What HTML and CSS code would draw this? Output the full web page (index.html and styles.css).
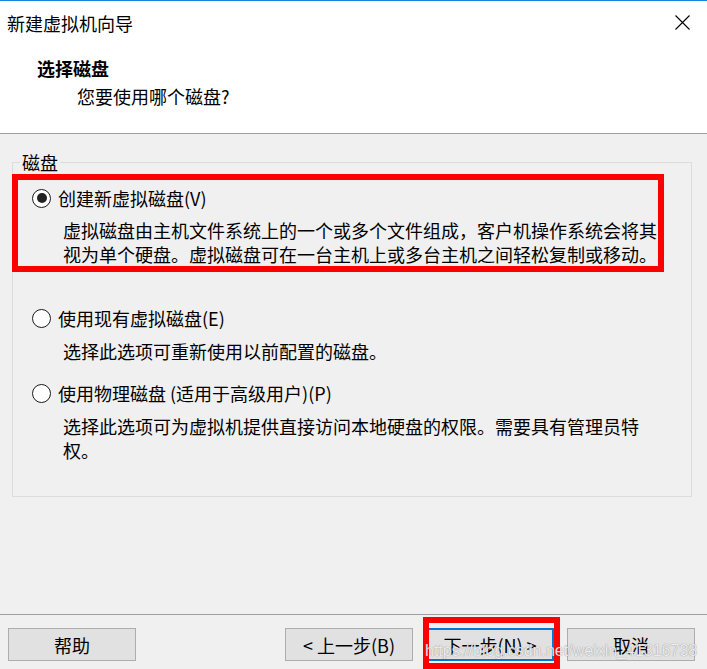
FILE: index.html
```html
<!DOCTYPE html>
<html lang="zh-CN">
<head>
<meta charset="utf-8">
<title>新建虚拟机向导</title>
<link rel="stylesheet" href="styles.css">
</head>
<body>
<div class="window">
  <div class="titlebar">
    <span class="title">新建虚拟机向导</span>
    <svg class="close" width="15" height="15" viewBox="0 0 15 15"><path d="M0.5 0.5L14.5 14.5M14.5 0.5L0.5 14.5" stroke="#000" stroke-width="1.1" fill="none"/></svg>
  </div>
  <div class="header">
    <div class="heading">选择磁盘</div>
    <div class="subheading">您要使用哪个磁盘?</div>
  </div>
  <div class="content">
    <fieldset class="group">
      <legend>磁盘</legend>
      <div class="option marked">
        <div class="opt-row"><span class="radio checked"></span><span class="label">创建新虚拟磁盘(V)</span></div>
        <p class="desc">虚拟磁盘由主机文件系统上的一个或多个文件组成，客户机操作系统会将其视为单个硬盘。虚拟磁盘可在一台主机上或多台主机之间轻松复制或移动。</p>
      </div>
      <div class="option second">
        <div class="opt-row"><span class="radio"></span><span class="label">使用现有虚拟磁盘(E)</span></div>
        <p class="desc">选择此选项可重新使用以前配置的磁盘。</p>
      </div>
      <div class="option third">
        <div class="opt-row"><span class="radio"></span><span class="label">使用物理磁盘 (适用于高级用户)(P)</span></div>
        <p class="desc">选择此选项可为虚拟机提供直接访问本地硬盘的权限。需要具有管理员特权。</p>
      </div>
    </fieldset>
  </div>
  <div class="footer">
    <button class="btn">帮助</button>
    <div class="spacer"></div>
    <button class="btn">&lt; 上一步(B)</button>
    <button class="btn default">下一步(N) &gt;</button>
    <button class="btn">取消</button>
    <span class="mark-next"></span>
    <span class="watermark">https://blog.csdn.net/weixin_41316738</span>
  </div>
</div>
</body>
</html>
```
FILE: styles.css
```css
html, body {
  margin: 0;
  padding: 0;
}
body {
  width: 707px;
  height: 669px;
  overflow: hidden;
  font-family: "Noto Sans CJK SC", "Liberation Sans", sans-serif;
  font-size: 18px;
  color: #000;
  background: #f0f0f0;
}
.window {
  height: 669px;
  box-sizing: border-box;
  border-top: 1px solid #1883d7;
  display: flex;
  flex-direction: column;
}
.titlebar {
  height: 45px;
  flex: none;
  background: #fff;
  display: flex;
  align-items: center;
  justify-content: space-between;
  padding: 0 17px 0 7px;
}
.title {
  line-height: 24px;
  margin-top: -2px;
}
.close {
  display: block;
  margin-top: -2px;
}
.header {
  height: 88px;
  flex: none;
  box-sizing: border-box;
  background: #fff;
  border-bottom: 1px solid #a0a0a0;
  padding-top: 10px;
}
.heading {
  font-weight: 700;
  line-height: 24px;
  margin-left: 37px;
}
.subheading {
  line-height: 24px;
  margin: 4px 0 0 77px;
}
.content {
  flex: 1;
  background: #f0f0f0;
  padding-top: 16px;
}
.group {
  margin: 0 15px 0 12px;
  padding: 0 0 34px 0;
  border: 1px solid #dcdcdc;
  min-width: 0;
}
.group legend {
  margin-left: 7px;
  padding: 0 2px;
  line-height: 24px;
}
.option .opt-row {
  height: 24px;
  display: flex;
  align-items: center;
}
.radio {
  width: 19px;
  height: 19px;
  box-sizing: border-box;
  border: 1px solid #1a1a1a;
  border-radius: 50%;
  background: #fff;
  flex: none;
  position: relative;
}
.radio.checked::after {
  content: "";
  position: absolute;
  left: 3.5px;
  top: 3.5px;
  width: 10px;
  height: 10px;
  border-radius: 50%;
  background: #222;
}
.label {
  margin-left: 7px;
  line-height: 24px;
  white-space: nowrap;
}
.desc {
  margin: 9px 0 0 31px;
  width: 600px;
  line-height: 24px;
}
.option.marked {
  margin-left: -1px;
  width: 652px;
  box-sizing: border-box;
  border: 6px solid #ff0000;
  padding: 6px 0 0 14px;
}
.option.marked .desc {
  margin-top: 8px;
}
.option.second {
  margin-top: 34px;
  padding-left: 19px;
}
.option.third {
  margin-top: 18px;
  padding-left: 19px;
}
.footer {
  flex: none;
  height: 55px;
  box-sizing: border-box;
  border-top: 1px solid #a0a0a0;
  background: #f0f0f0;
  display: flex;
  align-items: flex-start;
  gap: 13px;
  padding: 13px 12px 0 8px;
  position: relative;
}
.spacer {
  flex: 1;
}
.btn {
  width: 128px;
  height: 33px;
  box-sizing: border-box;
  padding: 0;
  margin: 0;
  border: 1px solid #adadad;
  background: #e1e1e1;
  color: #000;
  font-family: "Noto Sans CJK SC", "Liberation Sans", sans-serif;
  font-size: 18px;
  line-height: 24px;
  flex: none;
}
.btn.default {
  border: 2px solid #0078d7;
}
.mark-next {
  position: absolute;
  left: 423px;
  top: 2px;
  width: 137px;
  height: 52px;
  box-sizing: border-box;
  border: 6px solid #ff0000;
}
.watermark {
  position: absolute;
  left: 425px;
  top: 27px;
  font-family: "Liberation Sans", sans-serif;
  font-size: 16px;
  line-height: 18px;
  color: rgba(255, 255, 255, 0.85);
  text-shadow: 0 0 1px rgba(90, 90, 90, 0.8);
  white-space: nowrap;
  pointer-events: none;
}
```
